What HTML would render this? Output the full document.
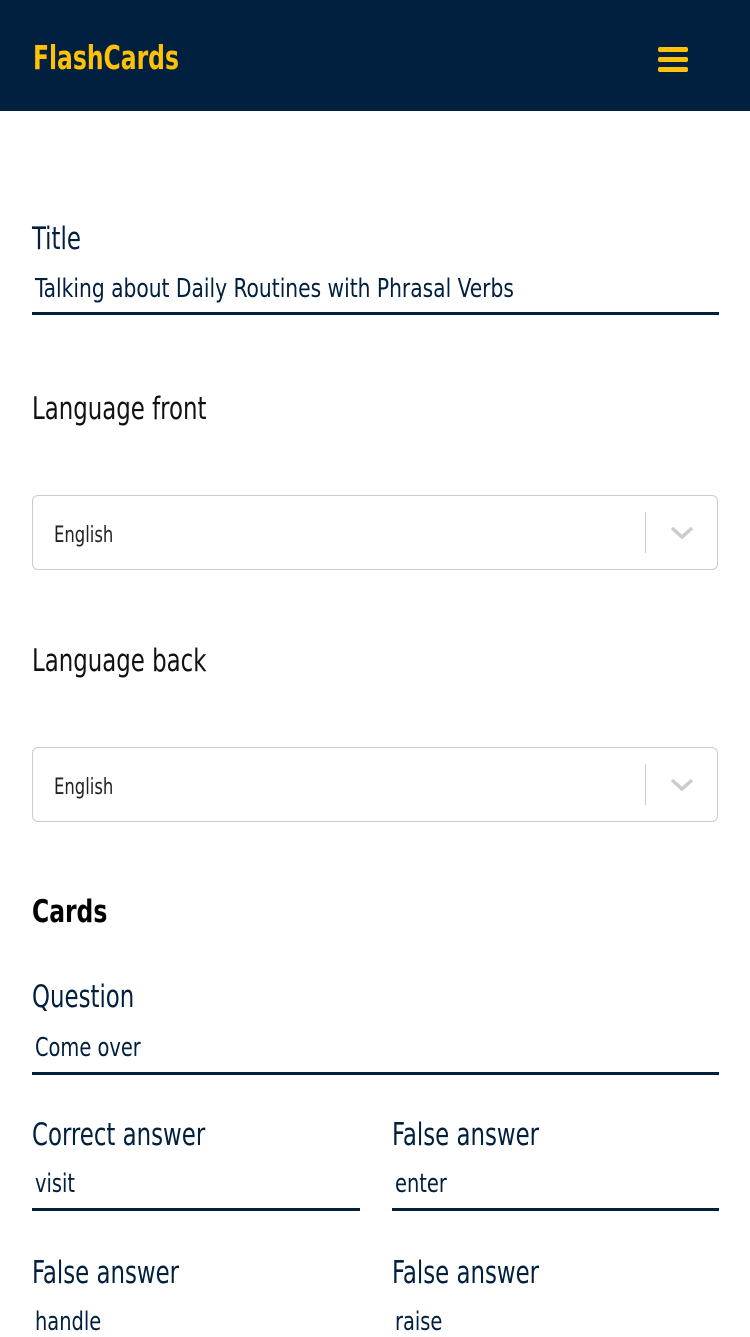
<!DOCTYPE html><html><head><style>
body{margin:0;width:750px;height:1334px;overflow:hidden;background:#fff;font-family:"DejaVu Sans Condensed","DejaVu Sans",sans-serif;color:#011f3e;position:relative}
.a{position:absolute;white-space:nowrap;line-height:1;transform-origin:0 0}
.lab{font-size:31px;color:#011f3e;transform:scaleX(0.82)}
.val{font-size:26px;color:#011f3e;transform:scaleX(0.83)}
.ul{position:absolute;height:3px;background:#011f3e}
.sel{position:absolute;left:32px;width:684px;height:73px;border:1px solid #ccc;border-radius:6px}
.sel .t{position:absolute;left:21px;top:27px;font-size:22px;color:#222;transform:scaleX(0.83);transform-origin:0 0}
.sel .s{position:absolute;left:612px;top:16px;width:1px;height:41px;background:#ccc}
</style></head><body>
<div style="position:absolute;left:0;top:0;width:750px;height:111px;background:#011f3e"></div>
<div class="a" style="left:33px;top:41px;font-size:33px;font-weight:bold;color:#ffc107;transform:scaleX(0.79)">FlashCards</div>
<div style="position:absolute;left:658px;top:47px;width:30px;height:5px;background:#ffc107;border-radius:2px"></div>
<div style="position:absolute;left:658px;top:57px;width:30px;height:5px;background:#ffc107;border-radius:2px"></div>
<div style="position:absolute;left:658px;top:67px;width:30px;height:5px;background:#ffc107;border-radius:2px"></div>

<div class="a lab" style="left:32px;top:224px">Title</div>
<div class="a val" style="left:35px;top:276px;transform:scaleX(0.865)">Talking about Daily Routines with Phrasal Verbs</div>
<div class="ul" style="left:32px;top:312px;width:687px"></div>

<div class="a lab" style="left:32px;top:394px;color:#111">Language front</div>
<div class="sel" style="top:495px"><div class="t">English</div><div class="s"></div>
<svg style="position:absolute;left:637px;top:30px" width="24" height="14"><path d="M2 2L12 11L22 2" stroke="#ccc" stroke-width="3.5" fill="none"/></svg></div>

<div class="a lab" style="left:32px;top:646px;color:#111">Language back</div>
<div class="sel" style="top:747px"><div class="t">English</div><div class="s"></div>
<svg style="position:absolute;left:637px;top:30px" width="24" height="14"><path d="M2 2L12 11L22 2" stroke="#ccc" stroke-width="3.5" fill="none"/></svg></div>

<div class="a" style="left:32px;top:897px;font-size:31px;font-weight:bold;color:#000;transform:scaleX(0.84)">Cards</div>

<div class="a lab" style="left:32px;top:982px">Question</div>
<div class="a val" style="left:35px;top:1035px">Come over</div>
<div class="ul" style="left:32px;top:1072px;width:687px"></div>

<div class="a lab" style="left:32px;top:1120px">Correct answer</div>
<div class="a val" style="left:35px;top:1171px">visit</div>
<div class="ul" style="left:32px;top:1208px;width:328px"></div>
<div class="a lab" style="left:392px;top:1120px">False answer</div>
<div class="a val" style="left:395px;top:1171px">enter</div>
<div class="ul" style="left:392px;top:1208px;width:327px"></div>

<div class="a lab" style="left:32px;top:1258px">False answer</div>
<div class="a val" style="left:35px;top:1309px">handle</div>
<div class="a lab" style="left:392px;top:1258px">False answer</div>
<div class="a val" style="left:395px;top:1309px">raise</div>
</body></html>
